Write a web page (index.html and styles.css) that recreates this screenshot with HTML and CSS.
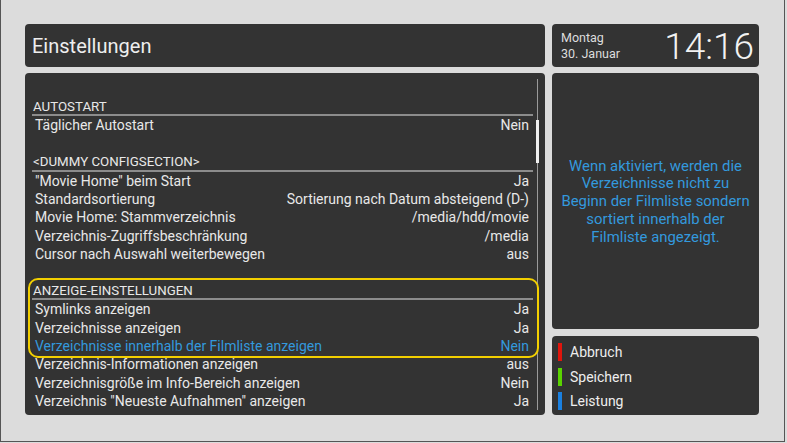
FILE: index.html
```html
<!DOCTYPE html>
<html lang="de">
<head>
<meta charset="utf-8">
<title>Einstellungen</title>
<link rel="stylesheet" href="styles.css">
</head>
<body>
<div class="frame">
  <div class="screen">
    <div class="panel title-panel">Einstellungen</div>
    <div class="panel clock-panel">
      <div class="date">
        <div>Montag</div>
        <div>30. Januar</div>
      </div>
      <div class="time">14:16</div>
    </div>
    <div class="panel list-panel">
      <div class="list">
        <div class="row heading">AUTOSTART</div>
        <div class="row item"><span>Täglicher Autostart</span><span>Nein</span></div>
        <div class="row"></div>
        <div class="row heading">&lt;DUMMY CONFIGSECTION&gt;</div>
        <div class="row item"><span>"Movie Home" beim Start</span><span>Ja</span></div>
        <div class="row item"><span>Standardsortierung</span><span>Sortierung nach Datum absteigend (D-)</span></div>
        <div class="row item"><span>Movie Home: Stammverzeichnis</span><span>/media/hdd/movie</span></div>
        <div class="row item"><span>Verzeichnis-Zugriffsbeschränkung</span><span>/media</span></div>
        <div class="row item"><span>Cursor nach Auswahl weiterbewegen</span><span>aus</span></div>
        <div class="row"></div>
        <div class="row heading">ANZEIGE-EINSTELLUNGEN</div>
        <div class="row item"><span>Symlinks anzeigen</span><span>Ja</span></div>
        <div class="row item"><span>Verzeichnisse anzeigen</span><span>Ja</span></div>
        <div class="row item selected"><span>Verzeichnisse innerhalb der Filmliste anzeigen</span><span>Nein</span></div>
        <div class="row item"><span>Verzeichnis-Informationen anzeigen</span><span>aus</span></div>
        <div class="row item"><span>Verzeichnisgröße im Info-Bereich anzeigen</span><span>Nein</span></div>
        <div class="row item"><span>Verzeichnis "Neueste Aufnahmen" anzeigen</span><span>Ja</span></div>
      </div>
      <div class="scrollbar"><div class="thumb"></div></div>
      <div class="focus-box"></div>
    </div>
    <div class="side">
      <div class="panel help-panel">
        <p class="help">Wenn aktiviert, werden die<br>Verzeichnisse nicht zu<br>Beginn der Filmliste sondern<br>sortiert innerhalb der<br>Filmliste angezeigt.</p>
      </div>
      <div class="panel keys-panel">
        <div class="key"><span class="bar red"></span><span>Abbruch</span></div>
        <div class="key"><span class="bar green"></span><span>Speichern</span></div>
        <div class="key"><span class="bar blue"></span><span>Leistung</span></div>
      </div>
    </div>
  </div>
</div>
</body>
</html>
```

FILE: styles.css
```css
html, body {
  margin: 0;
  padding: 0;
  background: #dcdcdc;
}

body {
  width: 787px;
  height: 443px;
  overflow: hidden;
  font-family: Roboto, "Liberation Sans", sans-serif;
  color: #e8e8e8;
}

.frame {
  box-sizing: border-box;
  width: 785px;
  height: 442px;
  border-left: 1px solid #555;
  border-right: 1px solid #555;
  border-bottom: 1px solid #555;
  padding: 24px 0 0 24px;
}

.screen {
  display: grid;
  grid-template-columns: 520px 207px;
  grid-template-rows: 43px 342px;
  column-gap: 7px;
  row-gap: 6px;
}

.panel {
  background: #333333;
  border-radius: 4px;
}

.title-panel {
  display: flex;
  align-items: center;
  padding-left: 7px;
  font-size: 20px;
  color: #eeeeee;
}

.clock-panel {
  display: flex;
  align-items: center;
  justify-content: space-between;
  padding: 0 5px 0 9px;
}

.date {
  font-size: 12.5px;
  line-height: 16px;
  color: #dddddd;
  margin-top: 1px;
}

.time {
  font-size: 37px;
  font-weight: 300;
  color: #f2f2f2;
  line-height: 1;
  margin-top: 2px;
}

.list-panel {
  position: relative;
  display: flex;
  align-items: flex-start;
  padding: 25px 0 0 7px;
  box-sizing: border-box;
}

.list {
  width: 501px;
  font-size: 14px;
}

.row {
  height: 18.375px;
  line-height: 18.375px;
  white-space: nowrap;
}

.heading {
  padding-left: 1px;
  font-size: 13.3px;
  box-shadow: inset 0 -2px 0 #8c8c8c;
}

.item {
  display: flex;
  justify-content: space-between;
  padding: 0 4px 0 3px;
}

.selected {
  color: #3399dd;
}

.scrollbar {
  width: 4px;
  height: 331px;
  margin: -19px 0 0 3px;
  background: linear-gradient(to right, transparent 1px, #9a9a9a 1px, #9a9a9a 2px, transparent 2px);
}

.thumb {
  margin-top: 41px;
  height: 43px;
  width: 3px;
  background: #f0f0f0;
}

.focus-box {
  position: absolute;
  left: 3px;
  top: 205px;
  width: 511px;
  height: 80px;
  box-sizing: border-box;
  border: 2px solid #f2cf00;
  border-radius: 10px;
}

.side {
  display: flex;
  flex-direction: column;
  gap: 7px;
}

.help-panel {
  height: 257px;
  display: flex;
  align-items: center;
  justify-content: center;
}

.help {
  margin: 0;
  text-align: center;
  font-size: 14.9px;
  line-height: 17.8px;
  color: #3399dd;
  margin-top: 2px;
  white-space: nowrap;
}

.keys-panel {
  height: 79px;
  box-sizing: border-box;
  padding: 4px 0 0 6px;
}

.key {
  display: flex;
  align-items: center;
  gap: 8px;
  height: 24.5px;
  font-size: 14px;
  color: #eeeeee;
}

.bar {
  width: 4px;
  height: 18px;
}

.red { background: #e0150c; }
.green { background: #5ad400; }
.blue { background: #1a80e0; }
```
